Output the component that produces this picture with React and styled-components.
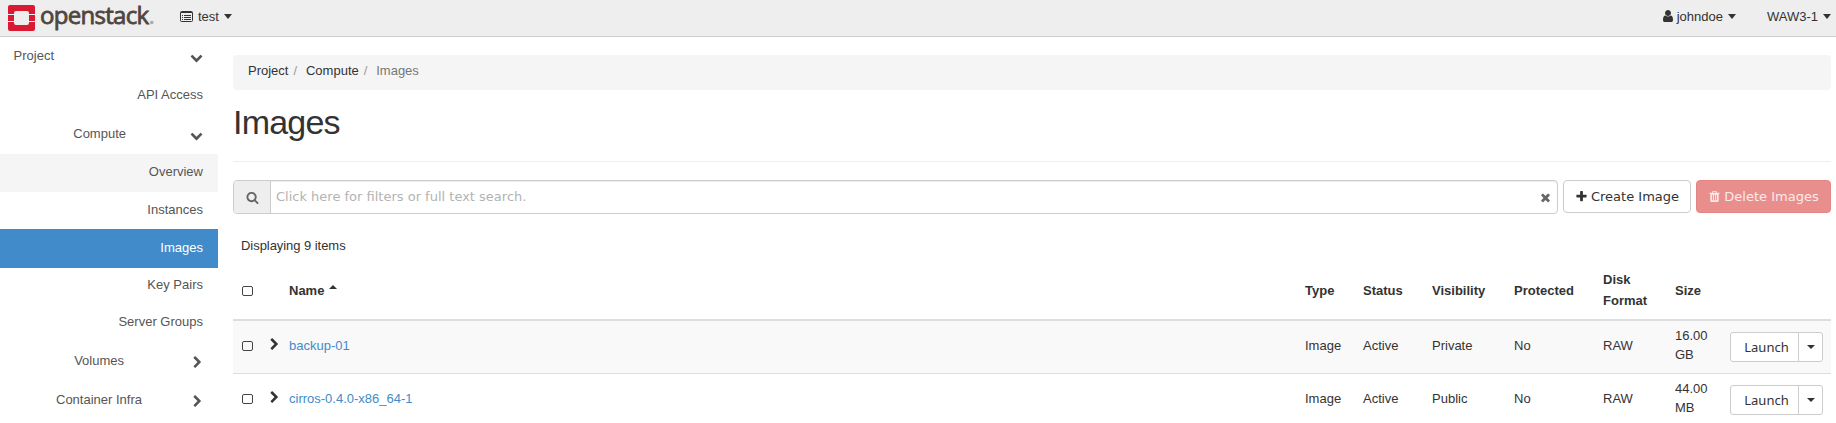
import React from "react";
import styled, { createGlobalStyle, css } from "styled-components";

const Global = createGlobalStyle`
  *, *::before, *::after { box-sizing: border-box; }
  html, body { margin: 0; padding: 0; background: #fff; }
  body {
    overflow: hidden;
    height: 423px;
    font-family: "Liberation Sans", Arial, sans-serif;
    font-size: 13px;
    line-height: 21px;
    color: #333;
  }
  button, input { font-family: "DejaVu Sans", sans-serif; font-size: 13px; }
`;

const paths = {
  search:
    "M1216 832q0-185-131.500-316.500t-316.500-131.500-316.500 131.500-131.500 316.500 131.500 316.500 316.500 131.500 316.500-131.500 131.500-316.500zm512 832q0 52-38 90t-90 38q-54 0-90-38l-343-342q-179 124-399 124-143 0-273.500-55.500t-225-150-150-225-55.500-273.500 55.500-273.500 150-225 225-150 273.500-55.500 273.500 55.500 225 150 150 225 55.500 273.500q0 220-124 399l343 343q37 37 37 90z",
  plus: "M1600 736v192q0 40-28 68t-68 28h-416v416q0 40-28 68t-68 28h-192q-40 0-68-28t-28-68v-416h-416q-40 0-68-28t-28-68v-192q0-40 28-68t68-28h416v-416q0-40 28-68t68-28h192q40 0 68 28t28 68v416h416q40 0 68 28t28 68z",
  trash:
    "M704 1376v-704q0-14-9-23t-23-9h-64q-14 0-23 9t-9 23v704q0 14 9 23t23 9h64q14 0 23-9t9-23zm256 0v-704q0-14-9-23t-23-9h-64q-14 0-23 9t-9 23v704q0 14 9 23t23 9h64q14 0 23-9t9-23zm256 0v-704q0-14-9-23t-23-9h-64q-14 0-23 9t-9 23v704q0 14 9 23t23 9h64q14 0 23-9t9-23zm-544-992h448l-48-117q-7-9-17-11h-317q-10 2-17 11zm928 32v64q0 14-9 23t-23 9h-96v948q0 83-47 143.500t-113 60.500h-832q-66 0-113-58.500t-47-141.500v-952h-96q-14 0-23-9t-9-23v-64q0-14 9-23t23-9h309l70-167q15-37 54-63t79-26h320q40 0 79 26t54 63l70 167h309q14 0 23 9t9 23z",
  times:
    "M1490 1322q0 40-28 68l-136 136q-28 28-68 28t-68-28l-294-294-294 294q-28 28-68 28t-68-28l-136-136q-28-28-28-68t28-68l294-294-294-294q-28-28-28-68t28-68l136-136q28-28 68-28t68 28l294 294 294-294q28-28 68-28t68 28l136 136q28 28 28 68t-28 68l-294 294 294 294q28 28 28 68z",
  user: "M1536 1399q0 109-62.500 187t-150.500 78h-854q-88 0-150.500-78t-62.500-187q0-85 8.500-160.500t31.500-152 58.500-131 94-89 134.500-34.500q131 128 313 128t313-128q76 0 134.500 34.500t94 89 58.500 131 31.500 152 8.500 160.500zm-256-887q0 159-112.500 271.500t-271.500 112.500-271.500-112.500-112.500-271.500 112.500-271.500 271.500-112.500 271.500 112.500 112.500 271.500z",
  right:
    "M1363 877l-742 742q-19 19-45 19t-45-19l-166-166q-19-19-19-45t19-45l531-531-531-531q-19-19-19-45t19-45l166-166q19-19 45-19t45 19l742 742q19 19 19 45t-19 45z",
  down: "M1683 808l-742 741q-19 19-45 19t-45-19l-742-741q-19-19-19-45.500t19-45.500l166-165q19-19 45-19t45 19l531 531 531-531q19-19 45-19t45 19l166 165q19 19 19 45.500t-19 45.500z",
};

const Svg = styled.svg`
  display: block;
  flex: none;
  fill: currentColor;
`;
const Icon = ({ name, size = 13, className }) => (
  <Svg className={className} width={size} height={size} viewBox="0 0 1792 1792">
    <path d={paths[name]} />
  </Svg>
);

const Caret = styled.span`
  flex: none;
  width: 8px;
  height: 4px;
  border: 4px solid transparent;
  border-bottom: 0;
  border-top-color: #333;
  ${(p) =>
    p.$up &&
    css`
      border-top: 0;
      border-bottom: 4px solid #333;
    `}
`;

const TopBar = styled.header`
  display: flex;
  align-items: flex-start;
  height: 37px;
  padding: 0 5px 0 8px;
  background: #eee;
  border-bottom: 1px solid #ccc;
`;
const Brand = styled.a`
  display: flex;
  padding-top: 5px;
  width: 172px;
`;
const Wordmark = styled.span`
  margin: -6px 0 0 5px;
  font: 24px/32px "Open Sans", sans-serif;
  color: #4f463e;
  height: 32px;
  letter-spacing: -0.7px;
  -webkit-text-stroke: 0.8px #4f463e;
`;
const Dot = styled.span`
  color: #aaa;
  -webkit-text-stroke: 0.5px #aaa;
`;
const Menu = styled.div`
  display: flex;
  align-items: center;
  height: 33px;
  gap: 5px;
  margin-left: ${(p) => p.$left || 0};
`;
const MenuCaret = styled(Caret)`
  height: 5px;
  border-top-width: 5px;
`;
const UserIcon = styled(Icon)`
  margin: 0 -3px 1px 0;
`;

const Body = styled.div`
  display: flex;
`;
const Sidebar = styled.nav`
  width: 218px;
  flex: none;
`;
const Item = styled.a`
  display: flex;
  align-items: center;
  justify-content: flex-end;
  height: ${(p) => p.$h}px;
  padding: 0 15px 3px 13px;
  color: ${(p) => (p.$active ? "#fff" : "#555")};
  background: ${(p) => (p.$active ? "#428bca" : p.$hover ? "#f5f5f5" : "transparent")};
`;
const ItemLabel = styled.span`
  margin-right: ${(p) => p.$gap}px;
`;
const NavIcon = styled(Icon)`
  margin-top: 4px;
  margin-right: ${(p) => (p.name === "right" ? -1 : 0)}px;
`;

const Main = styled.main`
  flex: 1;
  padding: 18px 5px 0 15px;
`;
const Crumbs = styled.div`
  display: flex;
  height: 35px;
  padding: 5px 15px;
  background: #f5f5f5;
  border-radius: 4px;
`;
const Slash = styled.span`
  width: 17.5px;
  padding-left: 5px;
  color: #999;
`;
const Current = styled.span`
  color: #777;
`;
const Title = styled.h1`
  margin: 0;
  height: 72px;
  padding-top: 11px;
  border-bottom: 1px solid #eee;
  font-size: 34px;
  line-height: 42px;
  font-weight: 400;
  letter-spacing: -0.8px;
`;
const Tools = styled.div`
  display: flex;
  gap: 5px;
  margin-top: 18px;
`;
const Search = styled.div`
  display: flex;
  flex: 1;
  height: 34px;
  border: 1px solid #ccc;
  border-radius: 4px;
  box-shadow: inset 0 1px 1px rgba(0, 0, 0, 0.075);
  overflow: hidden;
  align-items: center;
  padding-right: 5px;
  color: #666;
`;
const Addon = styled.span`
  display: flex;
  align-items: center;
  justify-content: center;
  width: 37px;
  height: 32px;
  background: #eee;
  border-right: 1px solid #ccc;
`;
const Input = styled.input`
  flex: 1;
  border: 0;
  outline: 0;
  background: transparent;
  padding: 0 5px 2px;
  &::placeholder {
    color: #b3b3b3;
    opacity: 1;
  }
`;
const Button = styled.button`
  display: flex;
  align-items: center;
  justify-content: center;
  gap: 3px;
  width: ${(p) => p.$w}px;
  height: 33px;
  padding: 0 0 1px;
  border: 1px solid ${(p) => (p.$danger ? "#e28583" : "#ccc")};
  border-radius: 4px;
  background: ${(p) => (p.$danger ? "#e88f8d" : "#fff")};
  color: ${(p) => (p.$danger ? "#fbeaea" : "#333")};
`;
const Count = styled.div`
  padding: 21px 8px 0;
  height: 55px;
  letter-spacing: -0.05px;
`;
const Table = styled.table`
  width: 100%;
  table-layout: fixed;
  border-collapse: separate;
  border-spacing: 0;
`;
const Th = styled.th`
  height: 52px;
  padding: 0 8px 8px;
  text-align: left;
  border-bottom: 2px solid #ddd;
`;
const Row = styled.tr`
  background: ${(p) => (p.$odd ? "#f9f9f9" : "#fff")};
`;
const Td = styled.td`
  height: 53px;
  padding: 0 8px 4px;
  line-height: 19px;
  border-bottom: 1px solid #ddd;
`;
const Check = styled.span`
  display: block;
  width: 11px;
  height: 10px;
  margin: 2px 0 0 1px;
  border: 1px solid #444;
  border-radius: 2px;
`;
const Expander = styled(Icon)`
  margin: 0 0 1px -6px;
`;
const Sort = styled.span`
  display: flex;
  gap: 5px;
  align-items: center;
`;
const UpCaret = styled(Caret)`
  margin-top: -6px;
`;
const Link = styled.a`
  color: #428bca;
`;
const Split = styled.div`
  display: flex;
  width: 93px;
  height: 30px;
  margin: 4px 0 0 0;
`;
const Launch = styled.button`
  width: 69px;
  height: 30px;
  padding: 0 0 0 4px;
  background: #fff;
  color: #333;
  border: 1px solid #ccc;
  border-radius: 3px 0 0 3px;
  font-family: "Noto Sans", sans-serif;
`;
const Toggle = styled(Launch)`
  display: flex;
  align-items: center;
  justify-content: center;
  width: 25px;
  padding: 0;
  margin-left: -1px;
  border-radius: 0 3px 3px 0;
`;

const nav = [
  { label: "Project", h: 39, icon: "down", gap: 136 },
  { label: "API Access", h: 39 },
  { label: "Compute", h: 39, icon: "down", gap: 64 },
  { label: "Overview", h: 38, hover: true },
  { label: "Instances", h: 37 },
  { label: "Images", h: 39, active: true },
  { label: "Key Pairs", h: 36 },
  { label: "Server Groups", h: 38 },
  { label: "Volumes", h: 39, icon: "right", gap: 67 },
  { label: "Container Infra", h: 39, icon: "right", gap: 49 },
];
const rows = [
  ["backup-01", "Image", "Active", "Private", "No", "RAW", "16.00 GB"],
  ["cirros-0.4.0-x86_64-1", "Image", "Active", "Public", "No", "RAW", "44.00 MB"],
];
const heads = ["Type", "Status", "Visibility", "Protected", "Disk Format", "Size"];
const widths = [33, 15, null, 58, 69, 82, 89, 72, 55, 109];

export default function App() {
  return (
    <>
      <Global />
      <TopBar>
        <Brand>
          <svg width="27" height="26" viewBox="0 0 27 26" fill="#da1a32">
            <path d="M2 0h23q2 0 2 2v7h-6V8q0-2-2-2H8Q6 6 6 8v1H0V2Q0 0 2 0z" />
            <path d="M0 10h6v6H0zM21 10h6v6h-6z" />
            <path d="M0 17h6v1q0 2 2 2h11q2 0 2-2v-1h6v7q0 2-2 2H2q-2 0-2-2z" />
          </svg>
          <Wordmark>
            openstack<Dot>.</Dot>
          </Wordmark>
        </Brand>
        <Menu>
          <svg width="13" height="11" viewBox="0 0 13 11" fill="none" stroke="#333">
            <rect x=".5" y=".5" width="12" height="10" rx="1" />
            <path d="M1 1.5h11M2 4.5h1M4 4.5h7M2 6.500h1M4 6.500h7M2 8.500h1M4 8.500h7" />
          </svg>
          <span>test</span>
          <MenuCaret />
        </Menu>
        <Menu $left="auto">
          <UserIcon name="user" size={14} />
          <span>johndoe</span>
          <MenuCaret />
        </Menu>
        <Menu $left="31px">
          <span>WAW3-1</span>
          <MenuCaret />
        </Menu>
      </TopBar>
      <Body>
        <Sidebar>
          {nav.map((n) => (
            <Item key={n.label} $h={n.h} $active={n.active} $hover={n.hover}>
              <ItemLabel $gap={n.gap || 0}>{n.label}</ItemLabel>
              {n.icon && <NavIcon name={n.icon} />}
            </Item>
          ))}
        </Sidebar>
        <Main>
          <Crumbs>
            <span>Project</span>
            <Slash>/</Slash>
            <span>Compute</span>
            <Slash>/</Slash>
            <Current>Images</Current>
          </Crumbs>
          <Title>Images</Title>
          <Tools>
            <Search>
              <Addon>
                <Icon name="search" size={13} />
              </Addon>
              <Input placeholder="Click here for filters or full text search." />
              <Icon name="times" />
            </Search>
            <Button $w={128}>
              <Icon name="plus" />
              Create Image
            </Button>
            <Button $w={135} $danger>
              <Icon name="trash" />
              Delete Images
            </Button>
          </Tools>
          <Count>Displaying 9 items</Count>
          <Table>
            <colgroup>
              {widths.map((w, i) => (
                <col key={i} style={w ? { width: w } : undefined} />
              ))}
            </colgroup>
            <thead>
              <tr>
                <Th>
                  <Check />
                </Th>
                <Th />
                <Th>
                  <Sort>
                    Name <UpCaret $up />
                  </Sort>
                </Th>
                {heads.map((h) => (
                  <Th key={h}>{h}</Th>
                ))}
                <Th />
              </tr>
            </thead>
            <tbody>
              {rows.map(([name, ...cells], i) => (
                <Row key={name} $odd={i === 0}>
                  <Td>
                    <Check />
                  </Td>
                  <Td>
                    <Expander name="right" />
                  </Td>
                  <Td>
                    <Link>{name}</Link>
                  </Td>
                  {cells.map((c, j) => (
                    <Td key={j}>{c}</Td>
                  ))}
                  <Td>
                    <Split>
                      <Launch>Launch</Launch>
                      <Toggle aria-label="More">
                        <Caret />
                      </Toggle>
                    </Split>
                  </Td>
                </Row>
              ))}
            </tbody>
          </Table>
        </Main>
      </Body>
    </>
  );
}
